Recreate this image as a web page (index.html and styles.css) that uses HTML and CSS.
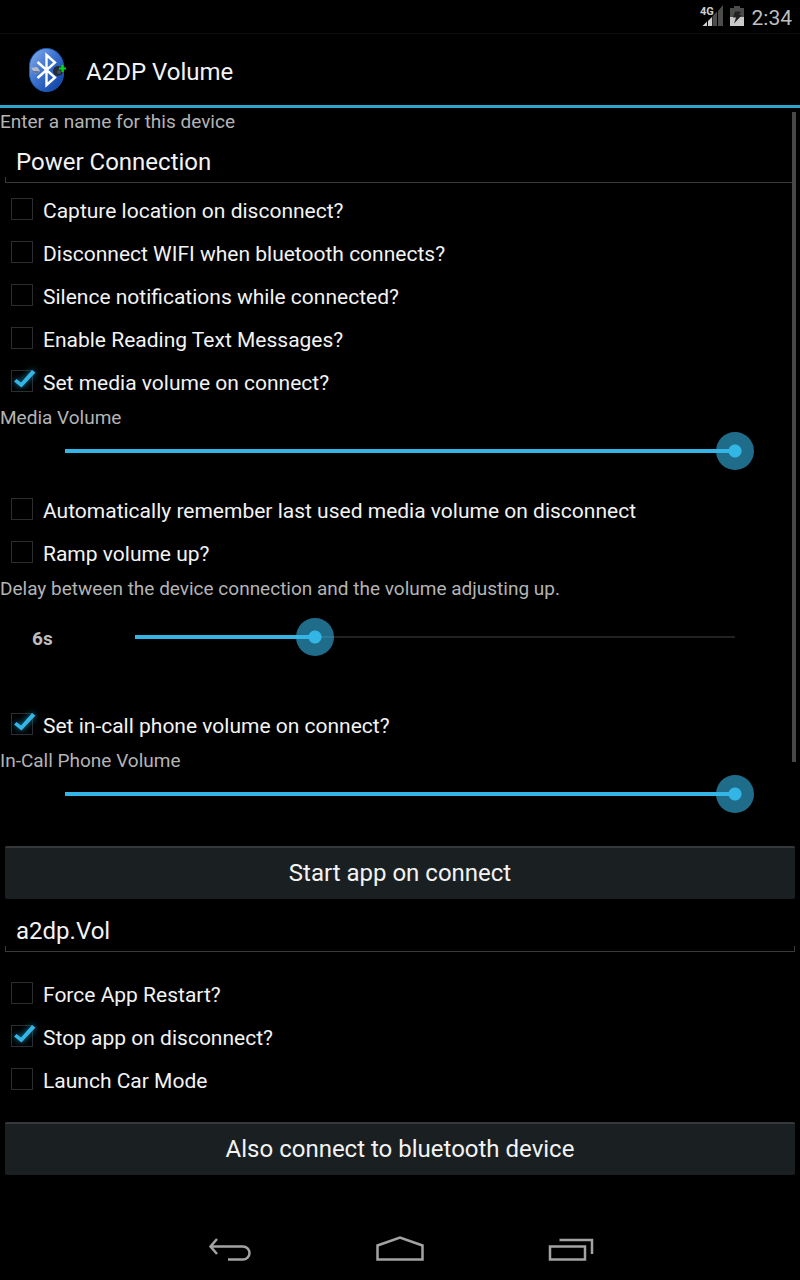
FILE: index.html
```html
<!DOCTYPE html>
<html lang="en">
<head>
<meta charset="utf-8">
<meta name="viewport" content="width=device-width, initial-scale=1">
<title>A2DP Volume</title>
<link rel="stylesheet" href="styles.css">
</head>
<body>
<svg class="defs" aria-hidden="true">
  <symbol id="tick" viewBox="0 0 32 28">
    <path d="M7 14.5 9.5 12 14 15.500 25 3 28.500 5.500 14.500 20.500Z" fill="#33b5e5"/>
  </symbol>
</svg>
<div class="screen">
  <div class="status">
    <svg class="signal" width="24" height="24" viewBox="0 0 24 24" aria-hidden="true">
      <path d="M12.500 12 17 7.500V22H12.500ZM18 7 23 1V22H18Z" fill="#4b4d4b"/>
      <path d="M2.500 22 7 17.500V22ZM8 17 12 13V22H8Z" fill="#d0d0d0"/>
      <text class="network" x="0" y="11">4G</text>
    </svg>
    <svg class="battery" width="14" height="22" viewBox="0 0 14 22" aria-hidden="true">
      <path d="M4 1H10V3H14V12H0V3H4Z" fill="#4b4d4b"/>
      <path d="M0 12H14V21H0Z" fill="#cacaca"/>
      <path d="M5 6.500H11L9 10H12L4 18.500 6 12.500H3Z" fill="#222"/>
    </svg>
    <time>2:34</time>
  </div>
  <header class="bar">
    <svg class="logo" width="40" height="46" viewBox="0 0 40 46" aria-hidden="true">
      <defs>
        <linearGradient id="blue" x1="0" y1="0" x2="1" y2="1">
          <stop offset="0" stop-color="#8db2ec"/><stop offset=".45" stop-color="#3d72d0"/><stop offset="1" stop-color="#083a9c"/>
        </linearGradient>
      </defs>
      <rect x="1.500" y="1.500" width="34" height="43" rx="17" ry="18" fill="url(#blue)" stroke="#1961b8"/>
      <path d="M3 21 9 20 12 24 8 27Z" fill="#b8bec8"/>
      <path d="M4 24 9 27 11 24Z" fill="#65758e"/>
      <circle cx="30" cy="24" r="5" fill="#252b35"/>
      <circle cx="31" cy="25" r="2" fill="#444c58"/>
      <path d="M9.500 15 27 30.500 18.500 38V8L27 15.500 9.500 31" fill="none" stroke="#fff" stroke-width="2.400"/>
      <path d="M31 21.500H38M34.500 18V25" stroke="#00dc18" stroke-width="2"/>
    </svg>
    <h1>A2DP Volume</h1>
  </header>
  <main class="content">
    <label class="caption" for="name">Enter a name for this device</label>
    <div class="field"><input id="name" type="text" value="Power Connection"></div>
    <label class="option"><span class="box"><input type="checkbox"><svg><use href="#tick"/></svg></span>Capture location on disconnect?</label>
    <label class="option"><span class="box"><input type="checkbox"><svg><use href="#tick"/></svg></span>Disconnect WIFI when bluetooth connects?</label>
    <label class="option"><span class="box"><input type="checkbox"><svg><use href="#tick"/></svg></span>Silence notifications while connected?</label>
    <label class="option"><span class="box"><input type="checkbox"><svg><use href="#tick"/></svg></span>Enable Reading Text Messages?</label>
    <label class="option"><span class="box"><input type="checkbox" checked><svg><use href="#tick"/></svg></span>Set media volume on connect?</label>
    <label class="caption" for="media">Media Volume</label>
    <div class="slider"><input id="media" type="range" min="0" max="15" value="15" style="--fill: 1"></div>
    <label class="option"><span class="box"><input type="checkbox"><svg><use href="#tick"/></svg></span>Automatically remember last used media volume on disconnect</label>
    <label class="option"><span class="box"><input type="checkbox"><svg><use href="#tick"/></svg></span>Ramp volume up?</label>
    <label class="caption" for="delay">Delay between the device connection and the volume adjusting up.</label>
    <div class="slider delay"><output for="delay">6s</output><input id="delay" type="range" min="0" max="20" value="6" style="--fill: 0.3"></div>
    <label class="option"><span class="box"><input type="checkbox" checked><svg><use href="#tick"/></svg></span>Set in-call phone volume on connect?</label>
    <label class="caption" for="call">In-Call Phone Volume</label>
    <div class="slider"><input id="call" type="range" min="0" max="5" value="5" style="--fill: 1"></div>
    <button class="action" type="button">Start app on connect</button>
    <div class="field app"><input type="text" value="a2dp.Vol" aria-label="App to start"></div>
    <label class="option"><span class="box"><input type="checkbox"><svg><use href="#tick"/></svg></span>Force App Restart?</label>
    <label class="option"><span class="box"><input type="checkbox" checked><svg><use href="#tick"/></svg></span>Stop app on disconnect?</label>
    <label class="option"><span class="box"><input type="checkbox"><svg><use href="#tick"/></svg></span>Launch Car Mode</label>
    <button class="action last" type="button">Also connect to bluetooth device</button>
    <div class="scrollbar"></div>
  </main>
  <nav class="nav">
    <button type="button" aria-label="Back"><svg width="48" height="32" viewBox="0 0 48 32"><path d="M11 6 4.500 13.500 11 21M4.500 13.500H37A6.500 6.500 0 0 1 37 26.500H22"/></svg></button>
    <button type="button" aria-label="Home"><svg width="50" height="32" viewBox="0 0 50 32"><path d="M2.500 26.500V12.500L25 4.500 47.500 12.500V26.500Z"/></svg></button>
    <button type="button" aria-label="Recent apps"><svg width="48" height="32" viewBox="0 0 48 32"><path d="M4 13.500H39V26.500H4ZM13.500 7H46V21"/></svg></button>
  </nav>
</div>
</body>
</html>
```
FILE: styles.css
```css
* {
  box-sizing: border-box;
}

body {
  margin: 0;
  background: #000;
  color: #f3f3f3;
  font-family: Roboto, "Noto Sans", sans-serif;
  font-size: 21px;
}

button,
input {
  margin: 0;
  font: inherit;
  color: inherit;
}

.defs {
  position: absolute;
  width: 0;
  height: 0;
}

.screen {
  display: flex;
  flex-direction: column;
  min-height: 100vh;
}

.status {
  display: flex;
  align-items: center;
  justify-content: flex-end;
  height: 34px;
  padding-right: 8px;
  border-bottom: 1px solid #0c0f10;
  color: #bebebe;
}

.status time {
  padding-top: 2px;
}

.signal {
  margin: 0 6px 2px 0;
  overflow: visible;
}

.battery {
  margin: 0 8px 2px 0;
}

.network {
  font-size: 11px;
  font-weight: 700;
  fill: #d0d0d0;
  stroke: #000;
  stroke-width: 2px;
  paint-order: stroke;
}

.bar {
  display: flex;
  align-items: center;
  gap: 18px;
  height: 74px;
  padding-left: 28px;
  border-bottom: 3px solid #2ca4d0;
}

.bar h1 {
  margin: 4px 0 0;
  font-size: 24px;
  font-weight: 400;
}

.content {
  position: relative;
  display: flex;
  flex-direction: column;
  flex: 1;
}

.caption {
  height: 26px;
  line-height: 28px;
  color: #b4b4b4;
  font-size: 19px;
}

.field {
  height: 55px;
  padding: 8px 5px 6px;
}

.field input {
  width: 100%;
  height: 41px;
  padding: 0 11px;
  border: 0;
  border-bottom: 1px solid #3a3a3a;
  background:
    linear-gradient(#3a3a3a, #3a3a3a) left bottom / 1px 5px no-repeat,
    linear-gradient(#3a3a3a, #3a3a3a) right bottom / 1px 5px no-repeat;
  outline: 0;
  font-size: 24px;
}

.app {
  margin: 4px 0 15px;
}

.option {
  display: flex;
  align-items: center;
  gap: 10px;
  height: 43px;
  padding-left: 11px;
}

.box {
  position: relative;
  display: flex;
  margin-bottom: 4px;
}

.box input {
  width: 22px;
  height: 22px;
  appearance: none;
  border: 1px solid #2b2e2e;
}

.box svg {
  position: absolute;
  top: -3px;
  left: -4px;
  display: none;
  width: 32px;
  height: 28px;
  filter: drop-shadow(0 0 3px #1586b0);
  pointer-events: none;
}

.box input:checked + svg {
  display: block;
}

.slider {
  display: flex;
  align-items: center;
  height: 42px;
  margin-bottom: 17px;
  padding: 0 46px;
}

.slider input {
  flex: 1;
  min-width: 0;
  height: 38px;
  appearance: none;
  outline: 0;
  background: none;
}

.slider input::-webkit-slider-runnable-track {
  height: 38px;
  background:
    linear-gradient(#33b5e5, #33b5e5) 19px center / calc((100% - 38px) * var(--fill)) 4px no-repeat,
    linear-gradient(#222, #222) 19px center / calc(100% - 38px) 2px no-repeat;
}

.slider input::-webkit-slider-thumb {
  width: 38px;
  height: 38px;
  appearance: none;
  border-radius: 50%;
  background: radial-gradient(circle, #33b5e5 6px, rgba(51, 181, 229, 0.6) 7px);
}

.delay {
  height: 72px;
  margin-bottom: 31px;
  padding-left: 32px;
}

.delay output {
  width: 84px;
  padding-top: 2px;
  color: #bebebe;
  font-size: 19px;
  font-weight: 700;
}

.action {
  height: 53px;
  margin: 14px 5px 0;
  padding: 0 0 2px;
  border: 0;
  border-top: 2px solid #35393c;
  border-radius: 2px;
  background: #1a2022;
  font-size: 24px;
}

.last {
  margin-top: 20px;
}

.scrollbar {
  position: absolute;
  top: 4px;
  right: 4px;
  width: 4px;
  height: 650px;
  background: #484848;
}

.nav {
  display: flex;
  justify-content: center;
  gap: 120px;
  height: 64px;
  padding-top: 2px;
}

.nav button {
  display: flex;
  align-items: center;
  justify-content: center;
  width: 50px;
  padding: 0;
  border: 0;
  background: none;
}

.nav path {
  fill: none;
  stroke: #a3a3a3;
  stroke-width: 2.5px;
}
```
